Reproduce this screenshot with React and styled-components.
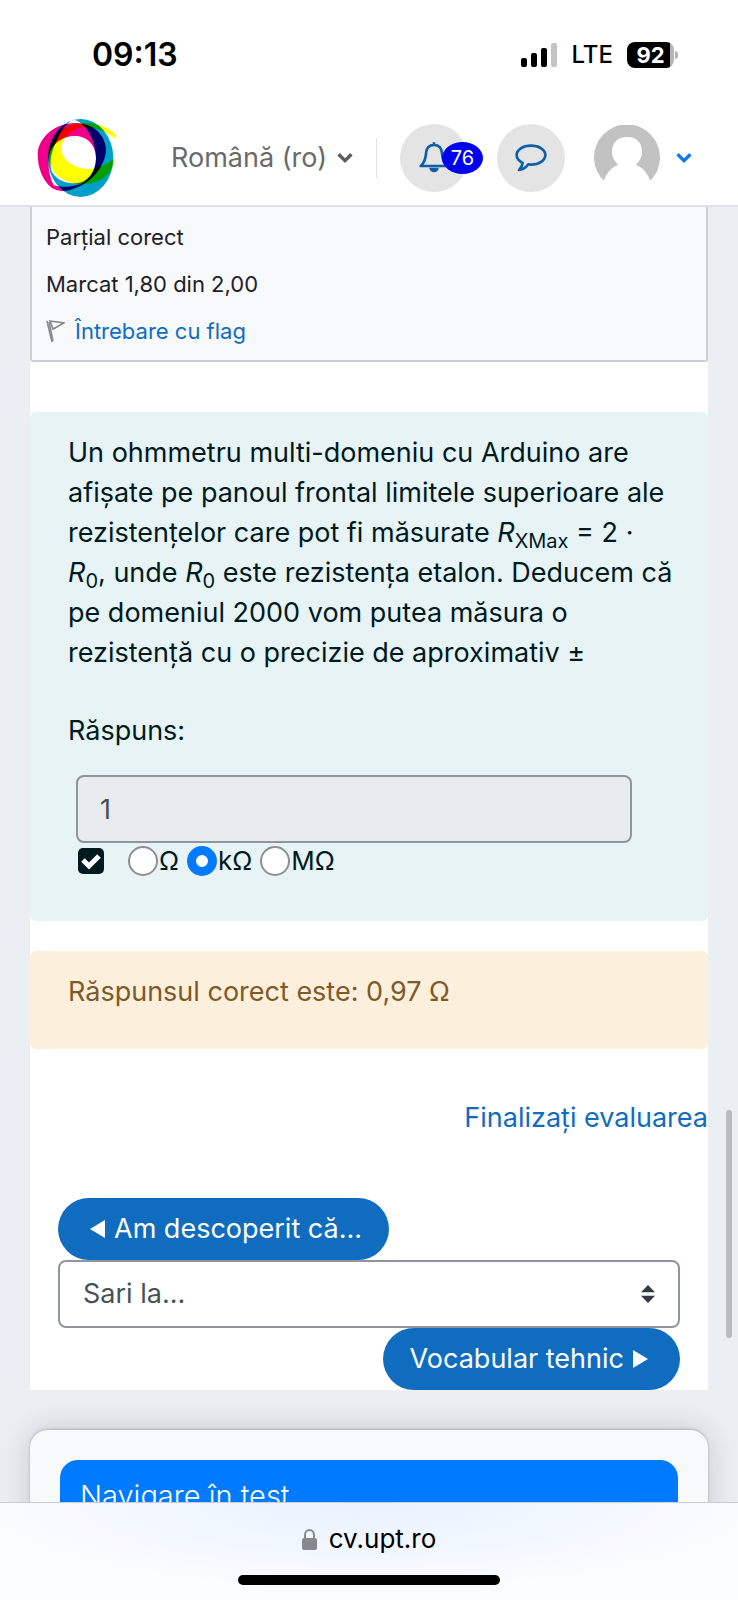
import React from "react";
import styled, { createGlobalStyle } from "styled-components";

const GlobalStyle = createGlobalStyle`
  *, *::before, *::after { box-sizing: border-box; }
  body {
    margin: 0;
    background: #ebeff4;
    font-family: Inter, "Liberation Sans", sans-serif;
    font-size: 27px;
    line-height: 40px;
    color: #1d2125;
  }
  button, input, select { font: inherit; }
  a { color: #0f6cbf; text-decoration: none; }
  p { margin: 0; }
`;

const Screen = styled.div`
  display: flex;
  flex-direction: column;
  height: 100vh;
  overflow: hidden;
`;

/* Status bar */
const StatusBar = styled.div`
  flex: none;
  display: flex;
  justify-content: space-between;
  align-items: center;
  height: 110px;
  padding: 0 64px 0 92px;
  background: #fff;
  color: #000;
`;

const Clock = styled.time`
  font-size: 32px;
  font-weight: 600;
`;

const StatusIcons = styled.div`
  display: flex;
  align-items: center;
  gap: 14px;
  font-size: 24px;
  font-weight: 500;
`;

const Battery = styled.span`
  position: relative;
  display: grid;
  place-items: center;
  width: 47px;
  height: 26px;
  border-radius: 8px;
  background: linear-gradient(90deg, #000 43px, #b5b5b5 43px);
  color: #fff;
  font-size: 22px;
  font-weight: 700;
  line-height: 26px;

  &::after {
    content: "";
    position: absolute;
    right: -4px;
    width: 3px;
    height: 8px;
    border-radius: 0 4px 4px 0;
    background: #b5b5b5;
  }
`;

/* Site header */
const Header = styled.header`
  flex: none;
  display: flex;
  align-items: center;
  height: 97px;
  padding: 0 46px 0 32px;
  border-bottom: 2px solid #dee2e6;
  background: #fff;
`;

const HeaderTools = styled.div`
  display: flex;
  align-items: center;
  margin-left: auto;
`;

const PlainButton = styled.button`
  display: flex;
  align-items: center;
  gap: ${(p) => p.$gap || 0}px;
  padding: 0;
  border: 0;
  background: none;
  color: ${(p) => p.$color};
  cursor: pointer;
`;

const Divider = styled.span`
  width: 1px;
  height: 40px;
  margin: 0 23px;
  background: #dee2e6;
`;

const RoundButton = styled.button`
  position: relative;
  display: grid;
  place-items: center;
  width: 68px;
  height: 68px;
  margin-right: 29px;
  padding: 0;
  border: 0;
  border-radius: 50%;
  background: #e4e4e4;
  cursor: pointer;
`;

const Badge = styled.span`
  position: absolute;
  top: 18px;
  left: 42px;
  width: 41px;
  height: 32px;
  border-radius: 50%;
  background: #0000f0;
  color: #fff;
  font-size: 20px;
  line-height: 32px;
  text-align: center;
`;

/* Scrolling page */
const Viewport = styled.main`
  position: relative;
  flex: 1;
  min-height: 0;
  overflow: hidden;
  padding: 0 30px;
`;

const ScrollThumb = styled.div`
  position: absolute;
  top: 903px;
  right: 6px;
  width: 6px;
  height: 228px;
  border-radius: 3px;
  background: #b9bcc0;
`;

const Sheet = styled.div`
  background: #fff;
`;

const InfoBox = styled.section`
  display: flex;
  flex-direction: column;
  gap: 7px;
  margin-bottom: 50px;
  padding: 10px 14px 9px;
  border: 2px solid #cad0d7;
  border-top: 0;
  border-radius: 0 0 3px 3px;
  background: #f8f9fb;
  font-size: 22px;
`;

const FlagLink = styled.a`
  display: flex;
  align-items: center;
  gap: 10px;
`;

const Question = styled.section`
  padding: 21px 28px 42px 38px;
  border-radius: 6px;
  background: #e7f3f5;
  color: #001a1e;
`;

const Sub = styled.sub`
  font-size: 20px;
  line-height: 20px;
  vertical-align: -6px;
`;

const AnswerLabel = styled.label`
  display: block;
  margin: 38px 0 24px;
`;

const AnswerInput = styled.input`
  display: block;
  width: calc(100% - 56px);
  height: 68px;
  margin-left: 8px;
  padding: 0 22px;
  border: 2px solid #8f959e;
  border-radius: 8px;
  background: #e9ecef;
  color: #495057;
`;

const UnitRow = styled.div`
  display: flex;
  align-items: center;
  gap: 8px;
  height: 36px;
  padding-left: 10px;
  font-size: 26px;
`;

const CheckMark = styled.input`
  appearance: none;
  width: 26px;
  height: 26px;
  margin: 0 16px 0 0;
  border-radius: 5px;
  background: #001a1e
    url("data:image/svg+xml,%3Csvg xmlns='http://www.w3.org/2000/svg' viewBox='0 0 26 26'%3E%3Cpath d='M5 12l6 6 10-10' fill='none' stroke='%23fff' stroke-width='5'/%3E%3C/svg%3E")
    center / contain;
`;

const UnitLabel = styled.label`
  display: flex;
  align-items: center;
  gap: 1px;
`;

const Radio = styled.input`
  appearance: none;
  width: 30px;
  height: 30px;
  margin: 0;
  border: 2px solid #8f8f8f;
  border-radius: 50%;
  background: #fff;

  &:checked { border: 9px solid #007aff; }
`;

const Feedback = styled.section`
  margin-top: 30px;
  padding: 21px 38px 37px;
  border-radius: 6px;
  background: #fcefdc;
  color: #7d5a29;
`;

const FinishRow = styled.div`
  display: flex;
  justify-content: flex-end;
  padding: 49px 0 60px;
`;

const ActivityNav = styled.nav`
  display: flex;
  flex-direction: column;
  padding: 0 28px;
`;

const Pill = styled.a`
  display: flex;
  align-items: center;
  align-self: ${(p) => p.$side};
  gap: 9px;
  height: 62px;
  padding: ${(p) => (p.$side === "flex-start" ? "0 27px 0 32px" : "0 32px 0 27px")};
  border-radius: 31px;
  background: #0f6cbf;
  color: #fff;
`;

const JumpSelect = styled.select`
  appearance: none;
  width: 100%;
  height: 68px;
  padding: 0 23px;
  border: 2px solid #8f959e;
  border-radius: 8px;
  background: #fff
    url("data:image/svg+xml,%3Csvg xmlns='http://www.w3.org/2000/svg' viewBox='0 0 14 18'%3E%3Cpath fill='%23343a40' d='M0 7.3L7 0l7 7.3zM0 10.7L7 18l7-7.3z'/%3E%3C/svg%3E")
    no-repeat right 23px center / 14px 18px;
  color: #495057;
`;

const NavCard = styled.aside`
  margin-top: 40px;
  padding: 30px 30px 60px;
  border-radius: 18px;
  background: #f8f9fb;
  box-shadow: 0 -1px 3px rgba(0, 0, 0, 0.2), 0 0 32px rgba(0, 0, 0, 0.16);
`;

const NavTitle = styled.h2`
  margin: 0;
  padding: 16px 20px;
  border-radius: 18px;
  background: #007aff;
  color: #fff;
  font-size: 29px;
  font-weight: 300;
`;

/* Browser bar */
const BrowserBar = styled.footer`
  flex: none;
  display: flex;
  flex-direction: column;
  align-items: center;
  height: 98px;
  padding-top: 16px;
  border-top: 1px solid #c9ced5;
  background: radial-gradient(ellipse 60% 100% at 50% 0, #e9f2ff, #fcfdff);
  color: #000;
`;

const Address = styled.div`
  display: flex;
  align-items: center;
  gap: 12px;
  font-size: 26px;
`;

const HomeIndicator = styled.div`
  width: 262px;
  height: 10px;
  margin-top: 16px;
  border-radius: 5px;
  background: #000;
`;

const BlendSvg = styled.svg`
  isolation: isolate;
  path { mix-blend-mode: multiply; }
`;

function Logo() {
  return (
    <BlendSvg width="92" height="92" viewBox="0 0 276 276" fillRule="evenodd" role="img" aria-label="UPT">
      <path
        fill="#009fc7"
        d="M48 138a98 117 0 1 0 196 0a98 117 0 1 0 -196 0zM128 24C112 24 88 50 72 90C58 120 50 150 60 180C75 205 100 214 130 214C170 212 192 175 192 135C190 70 150 28 128 24Z"
      />
      <path
        fill="#f0008a"
        d="M130 33C190 33 222 75 222 115C220 160 180 215 120 232C100 240 75 238 60 228C30 205 17 165 17 125C20 75 70 33 130 33ZM130 72C165 72 192 100 192 138C192 180 170 205 145 216C110 227 80 226 65 220C50 190 46 150 52 125C62 95 90 72 130 72Z"
      />
      <path
        fill="#ffff00"
        d="M50 130C52 85 85 42 130 35C180 28 228 42 253 70L250 82C225 52 165 40 138 48C110 58 82 92 88 118C98 155 145 175 182 170C212 164 235 150 248 138C243 180 215 215 150 217C90 215 50 180 50 130Z"
      />
    </BlendSvg>
  );
}

function Chevron({ color }) {
  return (
    <svg width="16" height="12" viewBox="0 0 16 12" fill="none" stroke={color} strokeWidth="3.4" aria-hidden="true">
      <path d="M1.6 2.2L8 8.6l6.4-6.4" />
    </svg>
  );
}

function Signal() {
  return (
    <svg width="37" height="24" viewBox="0 0 37 24" aria-hidden="true">
      <rect x="0" y="15" width="6" height="9" rx="2" />
      <rect x="10" y="10" width="6" height="14" rx="2" />
      <rect x="20" y="5" width="6" height="19" rx="2" />
      <rect x="30" y="0" width="6" height="24" rx="2" fill="#c4c4c4" />
    </svg>
  );
}

function BellIcon() {
  return (
    <svg width="30" height="31" viewBox="0 0 90 93" fill="none" stroke="#0f5ea8" strokeWidth="8" strokeLinejoin="round" aria-hidden="true">
      <path d="M45 1V9M5 72C17 62 20 48 21 34C22 18 30 9 45 9S68 18 69 34C70 48 73 62 85 72Z" />
      <path d="M31 77H59A14 14 0 0 1 31 77Z" fill="#0f5ea8" stroke="none" />
    </svg>
  );
}

function ChatIcon() {
  return (
    <svg width="32" height="28" viewBox="0 0 96 84" fill="none" stroke="#0f5ea8" strokeWidth="8" strokeLinejoin="round" aria-hidden="true">
      <path d="M48 5C24 5 5 17 5 33C5 43 12 51 23 57C22 65 18 71 12 78C25 76 34 70 40 61C43 62 45 62 48 62C72 62 91 49 91 33S72 5 48 5Z" />
    </svg>
  );
}

function Avatar() {
  return (
    <svg width="66" height="66" viewBox="0 0 66 66" aria-hidden="true">
      <path fill="#c2c2c2" d="M11 57A33 33 0 1 1 55 57L48 66H18Z" />
      <path fill="#fff" d="M33 12C43 12 48 18 48 27C48 33 45 36 42 40C50 43 54 49 57 58V66H9V58C12 49 16 43 24 40C21 36 18 33 18 27C18 18 23 12 33 12Z" />
    </svg>
  );
}

function FlagIcon() {
  return (
    <svg width="19" height="23" viewBox="0 0 19 23" fill="none" stroke="#85898d" strokeWidth="1.6" aria-hidden="true">
      <path d="M1 1L6 22M4 1L18 3L7 9Z" />
      <path d="M3 2L7 21" />
    </svg>
  );
}

function LockIcon() {
  return (
    <svg width="15" height="21" viewBox="0 0 15 21" aria-hidden="true">
      <rect y="9" width="15" height="12" rx="2" fill="#85888d" />
      <path d="M3 10V6a4.5 5 0 0 1 9 0v4" fill="none" stroke="#85888d" strokeWidth="2" />
    </svg>
  );
}

function Triangle({ d }) {
  return (
    <svg width="15" height="18" viewBox="0 0 15 18" fill="#fff" aria-hidden="true">
      <path d={d} />
    </svg>
  );
}

const UNITS = ["Ω", "kΩ", "MΩ"];

export default function App() {
  return (
    <Screen>
      <GlobalStyle />
      <StatusBar>
        <Clock>09:13</Clock>
        <StatusIcons>
          <Signal />
          <span>LTE</span>
          <Battery>92</Battery>
        </StatusIcons>
      </StatusBar>

      <Header>
        <Logo />
        <HeaderTools>
          <PlainButton $color="#6a6a6a" $gap={10}>
            Română (ro)
            <Chevron color="#5c5c5c" />
          </PlainButton>
          <Divider />
          <RoundButton aria-label="Notificări">
            <BellIcon />
            <Badge>76</Badge>
          </RoundButton>
          <RoundButton aria-label="Mesaje">
            <ChatIcon />
          </RoundButton>
          <PlainButton $color="#007aff" $gap={16} aria-label="Meniu utilizator">
            <Avatar />
            <Chevron color="#1278e8" />
          </PlainButton>
        </HeaderTools>
      </Header>

      <Viewport>
        <Sheet>
          <InfoBox>
            <p>Parțial corect</p>
            <p>Marcat 1,80 din 2,00</p>
            <FlagLink href="#flag">
              <FlagIcon />
              Întrebare cu flag
            </FlagLink>
          </InfoBox>

          <Question>
            <p>
              Un ohmmetru multi-domeniu cu Arduino are afișate pe panoul frontal limitele superioare ale
              rezistențelor care pot fi măsurate <i>R</i><Sub>XMax</Sub> = 2 ·<br />
              <i>R</i><Sub>0</Sub>, unde <i>R</i><Sub>0</Sub> este rezistența etalon. Deducem că pe domeniul
              2000 vom putea măsura o<br />
              rezistență cu o precizie de aproximativ ±
            </p>
            <AnswerLabel htmlFor="answer">Răspuns:</AnswerLabel>
            <AnswerInput id="answer" value="1" readOnly />
            <UnitRow>
              <CheckMark type="checkbox" defaultChecked aria-label="Răspuns evaluat" />
              {UNITS.map((unit) => (
                <UnitLabel key={unit}>
                  <Radio type="radio" name="unit" defaultChecked={unit === "kΩ"} />
                  {unit}
                </UnitLabel>
              ))}
            </UnitRow>
          </Question>

          <Feedback>
            <p>Răspunsul corect este: 0,97 Ω</p>
          </Feedback>

          <FinishRow>
            <a href="#finish">Finalizați evaluarea</a>
          </FinishRow>

          <ActivityNav>
            <Pill href="#prev" $side="flex-start">
              <Triangle d="M0 9L15 0V18Z" />
              Am descoperit că...
            </Pill>
            <JumpSelect aria-label="Sari la...">
              <option>Sari la...</option>
            </JumpSelect>
            <Pill href="#next" $side="flex-end">
              Vocabular tehnic
              <Triangle d="M15 9L0 0V18Z" />
            </Pill>
          </ActivityNav>
        </Sheet>

        <NavCard>
          <NavTitle>Navigare în test</NavTitle>
        </NavCard>
        <ScrollThumb />
      </Viewport>

      <BrowserBar>
        <Address>
          <LockIcon />
          cv.upt.ro
        </Address>
        <HomeIndicator />
      </BrowserBar>
    </Screen>
  );
}
